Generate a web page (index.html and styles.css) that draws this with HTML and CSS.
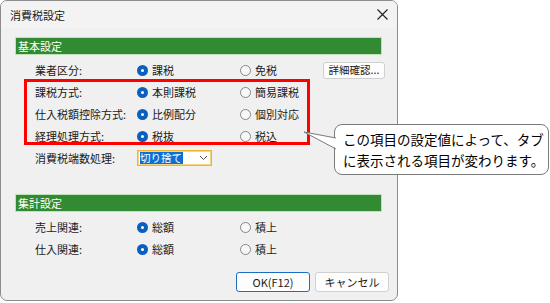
FILE: index.html
```html
<!DOCTYPE html>
<html lang="ja">
  <head>
    <meta charset="UTF-8" />
    <meta name="viewport" content="width=device-width, initial-scale=1.0" />
    <title>消費税設定</title>
    <link rel="stylesheet" href="styles.css">
  </head>
  <body>
    <div class="page">
      <div class="dialog">
        <div class="titlebar">
          <span class="title">消費税設定</span>
          <svg class="close" width="11" height="11" viewBox="0 0 11 11">
            <path d="M0.5 0.5 L10.5 10.5 M10.5 0.5 L0.5 10.5" stroke="#1f1f1f" stroke-width="1.1" fill="none" />
          </svg>
        </div>

        <div class="content">
          <div class="group-head">基本設定</div>
          <div class="rows">
            <div class="label">業者区分:</div>
            <div class="radio on">課税</div>
            <div class="radio">免税</div>
            <button class="small-btn">詳細確認...</button>

            <div class="label">課税方式:</div>
            <div class="radio on">本則課税</div>
            <div class="radio">簡易課税</div>
            <div></div>

            <div class="label">仕入税額控除方式:</div>
            <div class="radio on">比例配分</div>
            <div class="radio">個別対応</div>
            <div></div>

            <div class="label">経理処理方式:</div>
            <div class="radio on">税抜</div>
            <div class="radio">税込</div>
            <div></div>

            <div class="label">消費税端数処理:</div>
            <div class="select">
              <span class="select-value">切り捨て</span>
              <svg width="9" height="6" viewBox="0 0 9 6">
                <path d="M1 1 L4.5 4.5 L8 1" stroke="#555" stroke-width="1" fill="none" />
              </svg>
            </div>
          </div>

          <div class="group-head second">集計設定</div>
          <div class="rows">
            <div class="label">売上関連:</div>
            <div class="radio on">総額</div>
            <div class="radio">積上</div>
            <div></div>

            <div class="label">仕入関連:</div>
            <div class="radio on">総額</div>
            <div class="radio">積上</div>
            <div></div>
          </div>

          <div class="actions">
            <button class="btn primary">OK(F12)</button>
            <button class="btn">キャンセル</button>
          </div>
        </div>
      </div>

      <div class="highlight"></div>

      <div class="callout">
        <svg class="tail" width="36" height="24" viewBox="0 0 36 24">
          <polygon points="35,10 2,4 35,21" fill="#fff" />
          <path d="M34 10 L2 4 L34 21" stroke="#7a7a7a" stroke-width="1" fill="none" />
        </svg>
        <p>この項目の設定値によって、タブ<br>に表示される項目が変わります。</p>
      </div>
    </div>
  </body>
</html>
```

FILE: styles.css
```css
body {
  margin: 0;
  background: #ffffff;
  font-family: "Noto Sans CJK JP", "Noto Sans", sans-serif;
  color: #1a1a1a;
}

.page {
  position: relative;
  width: 550px;
  height: 303px;
}

.dialog {
  width: 398px;
  height: 301px;
  box-sizing: border-box;
  border: 1px solid #8c8c8c;
  border-radius: 7px;
  background: #f0f0f0;
  overflow: hidden;
}

.titlebar {
  height: 27px;
  background: #f3f3f3;
  display: flex;
  align-items: center;
  justify-content: space-between;
  padding: 0 9px 0 9px;
}

.title {
  font-size: 11px;
}

.close {
  display: block;
}

.content {
  padding: 9px 15px 0 14px;
  font-size: 11px;
}

.group-head {
  height: 16px;
  line-height: 16px;
  background: #328a32;
  border: 1px solid #bfe2b8;
  color: #ffffff;
  padding-left: 2px;
  font-size: 11px;
}

.group-head.second {
  margin-top: 25px;
}

.rows {
  display: grid;
  grid-template-columns: 102px 103px 83px 62px;
  grid-auto-rows: 22px;
  align-items: center;
  margin: 4px -3px 0 20px;
}

.radio {
  display: flex;
  align-items: center;
  gap: 4px;
}

.radio::before {
  content: "";
  width: 9px;
  height: 9px;
  border-radius: 50%;
  border: 1px solid #858585;
  background: #f8f8f8;
}

.radio.on::before {
  width: 3px;
  height: 3px;
  border: 4px solid #0b5fbd;
  background: #ffffff;
}

.small-btn {
  height: 17px;
  padding: 0;
  border: 1px solid #cfcfcf;
  border-radius: 3px;
  background: #fdfdfd;
  font-family: inherit;
  font-size: 10.5px;
  color: #1a1a1a;
  line-height: 1;
}

.select {
  width: 75px;
  height: 16px;
  box-sizing: border-box;
  border: 1px solid #f0b429;
  box-shadow: inset 0 0 0 1px #f7d57a;
  background: #ffffff;
  display: flex;
  align-items: center;
  justify-content: space-between;
  padding: 0 3px 0 2px;
}

.select-value {
  background: #0a6fd6;
  color: #ffffff;
  font-size: 10.5px;
  line-height: 12px;
  padding-right: 1px;
}

.actions {
  display: flex;
  justify-content: flex-end;
  gap: 5px;
  margin: 12px -7px 0 0;
}

.btn {
  width: 74px;
  height: 20px;
  border: 1px solid #d0d0d0;
  border-radius: 3px;
  background: #fdfdfd;
  font-family: inherit;
  font-size: 11px;
  color: #1a1a1a;
  padding: 0;
}

.btn.primary {
  border-color: #1a6fc4;
}

/* annotation layers */
.highlight {
  position: absolute;
  left: 24px;
  top: 79px;
  width: 286px;
  height: 66px;
  box-sizing: border-box;
  border: 3px solid #ff0000;
}

.callout {
  position: absolute;
  left: 334px;
  top: 124px;
  width: 215px;
  height: 51px;
  box-sizing: border-box;
  border: 1px solid #7a7a7a;
  border-radius: 8px;
  background: #ffffff;
}

.callout p {
  margin: 0;
  padding: 4px 0 0 8px;
  font-size: 13.5px;
  line-height: 21px;
  color: #000000;
  white-space: nowrap;
}

.tail {
  position: absolute;
  left: -33px;
  top: 3px;
}
```
